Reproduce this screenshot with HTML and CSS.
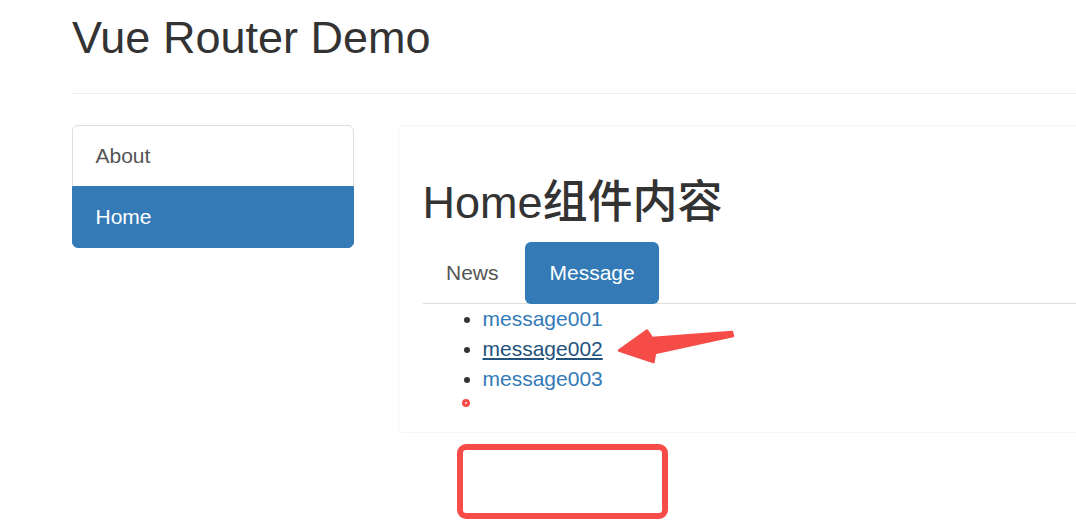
FILE: index.html
```html
<!DOCTYPE html>
<html lang="en">
<head>
  <meta charset="UTF-8">
  <meta name="viewport" content="width=device-width, initial-scale=1.0">
  <title>Vue Router Demo</title>
  <link rel="stylesheet" href="styles.css">
</head>
<body>

  <div class="container">
    <div class="page-header">
      <h2>Vue Router Demo</h2>
    </div>

    <div class="row">
      <div class="list-group">
        <a class="list-group-item" href="#/about">About</a>
        <a class="list-group-item active" href="#/home">Home</a>
      </div>

      <div class="panel">
        <div class="panel-body">
          <h2>Home组件内容</h2>
          <ul class="nav-tabs">
            <li><a href="#/home/news">News</a></li>
            <li><a class="active" href="#/home/message">Message</a></li>
          </ul>
          <ul class="messages">
            <li><a href="#/home/message/detail/1">message001</a></li>
            <li><a class="hover" href="#/home/message/detail/2">message002</a></li>
            <li><a href="#/home/message/detail/3">message003</a></li>
          </ul>
        </div>
      </div>
    </div>
  </div>

  <!-- annotations drawn over the screenshot -->
  <svg class="note-arrow" width="1076" height="530" viewBox="0 0 1076 530">
    <polygon points="619,350.5 647,330.5 652,338 732,332 733,336 655,353 653.5,362" fill="#f64c48" stroke="#f64c48" stroke-width="2.5" stroke-linejoin="round"/>
  </svg>
  <span class="note-dot"></span>
  <div class="note-box"></div>

</body>
</html>
```

FILE: styles.css
```css
/* Global styles */
html, body {
  overflow: hidden;
}

body {
  margin: 0;
  font-family: 'Liberation Sans', Arial, 'Noto Sans CJK SC', sans-serif;
  font-size: 21px;
  line-height: 30px;
  color: #333;
  background-color: #fff;
}

a {
  color: #337ab7;
  text-decoration: none;
}

h2 {
  font-size: 45px;
  font-weight: 500;
  line-height: 49.5px;
  margin: 30px 0 15px;
}

.container {
  width: 1200px;
  padding-left: 72px;
}

/* Header */
.page-header {
  padding-bottom: 15px;
  margin-bottom: 31px;
  border-bottom: 1px solid #eee;
}

.page-header h2 {
  margin-top: 13px;
}

/* Layout */
.row {
  display: flex;
  align-items: flex-start;
  gap: 44px;
}

/* Side menu */
.list-group {
  width: 282px;
  flex: 0 0 282px;
  display: flex;
  flex-direction: column;
}

.list-group-item {
  display: block;
  padding: 15px 22.5px;
  border: 1px solid #ddd;
  margin-bottom: -1px;
  color: #555;
  background-color: #fff;
}

.list-group-item:first-child {
  border-radius: 6px 6px 0 0;
}

.list-group-item:last-child {
  border-radius: 0 0 6px 6px;
  margin-bottom: 0;
}

.list-group-item.active {
  background-color: #337ab7;
  border-color: #337ab7;
  color: #fff;
}

/* Content panel */
.panel {
  flex: 0 0 760px;
  border: 1px solid #f6f6f6;
  border-radius: 6px;
  box-shadow: 0 1px 1px rgba(0, 0, 0, 0.03);
  background-color: #fff;
}

.panel-body {
  padding: 22px 22.5px 22.5px 23.5px;
}

/* Tabs */
.nav-tabs {
  display: flex;
  list-style: none;
  margin: 0;
  padding: 0;
  border-bottom: 1px solid #ddd;
}

.nav-tabs li {
  margin-bottom: -1px;
  margin-right: 3px;
}

.nav-tabs a {
  display: block;
  padding: 15px 22.5px;
  border: 1px solid transparent;
  border-radius: 6px;
  color: #555;
}

.nav-tabs a.active {
  padding: 15px 23.5px;
  background-color: #337ab7;
  color: #fff;
}

/* Message list */
.messages {
  margin: 0 0 15px;
  padding-left: 60px;
}

.messages a.hover {
  color: #23527c;
  text-decoration: underline;
}

/* Annotations */
.note-arrow {
  position: absolute;
  left: 0;
  top: 0;
  pointer-events: none;
}

.note-dot {
  position: absolute;
  left: 462px;
  top: 399px;
  width: 2px;
  height: 2px;
  border: 3.5px solid #f64c48;
  border-radius: 50%;
  background-color: #fde;
}

.note-box {
  position: absolute;
  left: 457px;
  top: 444px;
  width: 199px;
  height: 63px;
  border: 6px solid #f64c48;
  border-radius: 9px;
}
```
